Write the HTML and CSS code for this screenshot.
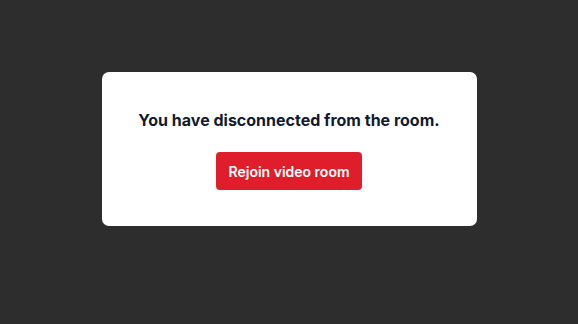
FILE: index.html
```html
<!DOCTYPE html>
<html lang="en">
<head>
<meta charset="utf-8">
<title>Disconnected</title>
<link rel="stylesheet" href="styles.css">
</head>
<body>
<main class="screen">
  <section class="card">
    <h1 class="title">You have disconnected from the room.</h1>
    <button class="rejoin" type="button">Rejoin video room</button>
  </section>
</main>
</body>
</html>
```
FILE: styles.css
```css
html, body {
  margin: 0;
  padding: 0;
  height: 100%;
}
body {
  background: #2d2d2d;
  font-family: Inter, "Noto Sans", sans-serif;
}
.screen {
  display: flex;
  justify-content: center;
  padding-top: 72px;
}
.card {
  box-sizing: border-box;
  width: 375px;
  height: 154px;
  background: #ffffff;
  border-radius: 7px;
  display: flex;
  flex-direction: column;
  align-items: center;
  padding-top: 36px;
}
.title {
  margin: 0;
  font-size: 16px;
  line-height: 24px;
  font-weight: 700;
  color: #131a2c;
}
.rejoin {
  margin-top: 20px;
  height: 38px;
  padding: 0 12.5px;
  border: none;
  border-radius: 4px;
  background: #e01e2b;
  color: #ffffff;
  font-family: Inter, "Noto Sans", sans-serif;
  font-size: 14px;
  font-weight: 600;
}
```
